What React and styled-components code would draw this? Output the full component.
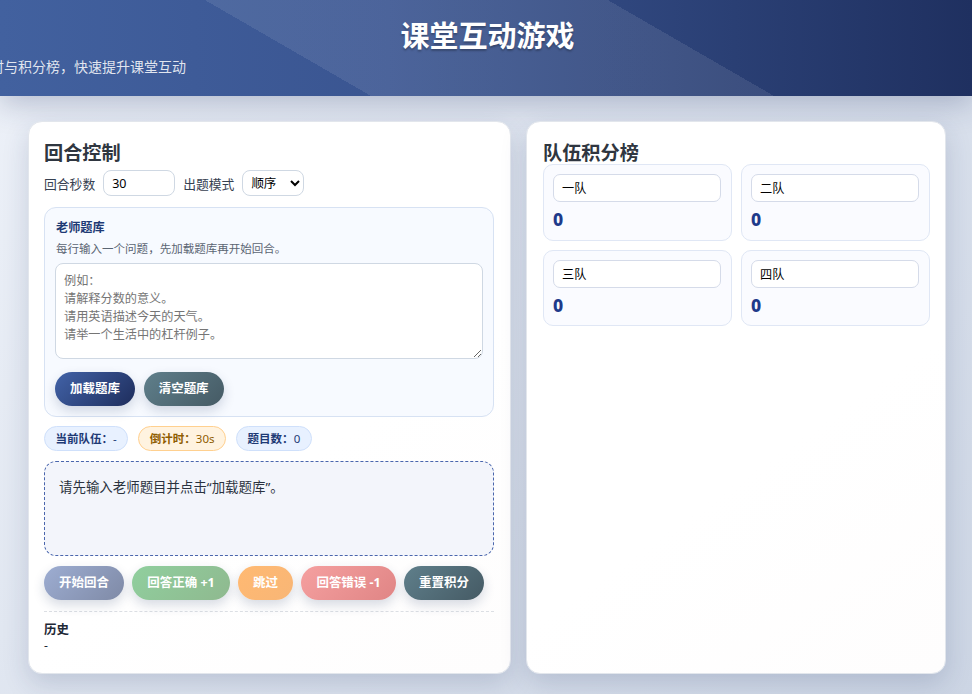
import React from "react";
import styled, { createGlobalStyle } from "styled-components";

const stack = `"Noto Sans", "Noto Sans CJK SC", sans-serif`;
const COMMA = "\uFF0C";
const COLON = "\uFF1A";

const Global = createGlobalStyle`
  * { box-sizing: border-box; }
  html, body { margin: 0; padding: 0; height: 694px; overflow: hidden; }
  body {
    font-family: ${stack};
    color: #1f2937;
    background: linear-gradient(135deg, #eef2f9 0%, #ccd5e4 100%);
  }
`;

const Page = styled.div`
  width: 972px;
  height: 694px;
  overflow: hidden;
  display: flex;
  flex-direction: column;
`;

const Hero = styled.header`
  height: 96px;
  flex: none;
  color: #fff;
  padding-top: 17px;
  background:
    linear-gradient(30deg, rgba(255,255,255,0) 32.6%, rgba(255,255,255,.09) 32.6%, rgba(255,255,255,.09) 68%, rgba(255,255,255,0) 68%),
    linear-gradient(90deg, #42619f 0%, #3a5591 40%, #1f3060 100%);
  box-shadow: 0 8px 28px rgba(30,48,96,.26);
`;

const Title = styled.h1`
  margin: 0;
  padding-left: 3px;
  font-size: 29px;
  line-height: 38px;
  font-weight: 700;
  text-align: center;
  text-shadow: 0 2px 2px rgba(0,0,0,.25);
`;

const Subtitle = styled.p`
  margin: 2px 0 0 -80px;
  font-size: 14px;
  line-height: 20px;
  white-space: nowrap;
  color: rgba(255,255,255,.85);
`;

const Main = styled.main`
  display: grid;
  grid-template-columns: 483px 420px;
  gap: 15px;
  padding: 25px 0 20px 28px;
  flex: 1;
  min-height: 0;
`;

const Card = styled.section`
  background: linear-gradient(145deg, #fff 60%, #fefdfd 100%);
  border: 1px solid #e2e6ec;
  border-radius: 14px;
  padding: 17px 16px 16px ${p => p.$left}px;
  box-shadow: 0 10px 26px rgba(30,48,96,.17);
`;

const CardTitle = styled.h2`
  margin: 0;
  font-size: 19.2px;
  line-height: 28px;
  font-weight: 700;
  color: #2f3640;
`;

const ControlRow = styled.div`
  display: flex;
  align-items: center;
  height: 26px;
  margin-top: 3px;
  font-size: 12.8px;
  color: #374151;
`;

const FieldLabel = styled.label`
  margin-right: 8px;
`;

const NumberInput = styled.input`
  width: 72px;
  height: 26px;
  margin-right: 8px;
  padding: 0 8px;
  border: 1px solid #cfd8e3;
  border-radius: 8px;
  font: 12.48px ${stack};
  color: #000;
  background: #fff;
`;

const ModeSelect = styled.select`
  width: 62px;
  height: 26px;
  padding: 0 4px;
  border: 1px solid #cfd8e3;
  border-radius: 8px;
  font: 12.48px ${stack};
  color: #000;
  background: #fff;
`;

const BankPanel = styled.div`
  margin-top: 11px;
  padding: 10px;
  height: 210px;
  background: #f7faff;
  border: 1px solid #d7e2f3;
  border-radius: 12px;
`;

const BankTitle = styled.div`
  margin-top: 1px;
  padding-left: 1px;
  font-size: 12.16px;
  line-height: 18px;
  font-weight: 700;
  color: #1e3a75;
`;

const BankHint = styled.div`
  margin-top: 4px;
  padding-left: 1px;
  font-size: 11.52px;
  line-height: 16px;
  color: #5b6573;
`;

const QuestionArea = styled.textarea`
  display: block;
  width: 100%;
  height: 96px;
  margin-top: 6px;
  padding: 8px 8px;
  border: 1px solid #cfd8e3;
  border-radius: 8px;
  background: #fff;
  font: 12.16px/18px ${stack};
  color: #333;
  &::placeholder { color: #757575; opacity: 1; }
`;

const ButtonRow = styled.div`
  display: flex;
  gap: ${p => p.$gap}px;
  margin-top: ${p => p.$top}px;
`;

const palettes = {
  primary: "linear-gradient(135deg, #4263a8, #1e2d5c)",
  slate: "linear-gradient(135deg, #5f7f8b, #455a64)",
  soft: "linear-gradient(135deg, #9dadd2, #7f8aa6)",
  green: "linear-gradient(135deg, #90cf9e, #8fb98f)",
  orange: "linear-gradient(135deg, #ffb972, #f8b676)",
  red: "linear-gradient(135deg, #f5a0a0, #e08585)",
};

const Pill = styled.button`
  height: 34px;
  padding: 0 15px;
  border: none;
  border-radius: 17px;
  font: 700 12.48px/34px ${stack};
  color: #fff;
  background: ${p => palettes[p.$tone]};
  box-shadow: 0 5px 12px rgba(30,48,96,.18);
  white-space: nowrap;
`;

const StatusRow = styled.div`
  display: flex;
  gap: 10px;
  margin-top: 9px;
`;

const chips = {
  blue: { bg: "#e8f1ff", border: "#cfe0fb", color: "#1e3a75" },
  amber: { bg: "#fff3e0", border: "#ffd08f", color: "#8f5d00" },
};

const Chip = styled.div`
  height: 25px;
  padding: 0 10.5px;
  border-radius: 13px;
  border: 1px solid ${p => chips[p.$tone].border};
  background: ${p => chips[p.$tone].bg};
  color: ${p => chips[p.$tone].color};
  font-size: 11.52px;
  line-height: 23px;
  white-space: nowrap;
  b { font-weight: 700; }
`;

const PromptBox = styled.div`
  height: 95px;
  margin-top: 10px;
  padding: 16px 14px;
  background: #f3f5fb;
  border: 1px dashed #4a66ad;
  border-radius: 12px;
  font-size: 13.44px;
  line-height: 18px;
  color: #2b3340;
`;

const History = styled.div`
  margin-top: 11px;
  padding-top: 9px;
  border-top: 1px dashed #dcdfe4;
  font-size: 12.16px;
  color: #1f2937;
`;

const HistoryTitle = styled.div`
  font-weight: 700;
  font-size: 12.48px;
  line-height: 18px;
`;

const HistoryBody = styled.div`
  line-height: 13px;
`;

const TeamGrid = styled.div`
  display: grid;
  grid-template-columns: 189px 189px;
  gap: 9px 9px;
  margin-top: -3px;
`;

const TeamCard = styled.div`
  height: 76.5px;
  padding: 9px 9px;
  background: #fafbff;
  border: 1px solid #e0e7f5;
  border-radius: 10px;
`;

const TeamInput = styled.input`
  display: block;
  width: 168px;
  height: 28px;
  padding: 0 8px;
  border: 1px solid #d5dbe9;
  border-radius: 7px;
  background: #fff;
  font: 12.16px ${stack};
  color: #000;
`;

const Score = styled.div`
  margin-top: 7px;
  font-size: 17.6px;
  line-height: 20px;
  font-weight: 800;
  color: #1e3a8a;
`;

const teams = ["一队", "二队", "三队", "四队"];

export default function App() {
  return (
    <Page>
      <Global />
      <Hero>
        <Title>课堂互动游戏</Title>
        <Subtitle>{`通过回合计时与积分榜${COMMA}快速提升课堂互动`}</Subtitle>
      </Hero>
      <Main>
        <Card $left={15}>
          <CardTitle>回合控制</CardTitle>
          <ControlRow>
            <FieldLabel>回合秒数</FieldLabel>
            <NumberInput type="text" defaultValue="30" />
            <FieldLabel>出题模式</FieldLabel>
            <ModeSelect defaultValue="顺序">
              <option>顺序</option>
              <option>随机</option>
            </ModeSelect>
          </ControlRow>
          <BankPanel>
            <BankTitle>老师题库</BankTitle>
            <BankHint>{`每行输入一个问题${COMMA}先加载题库再开始回合。`}</BankHint>
            <QuestionArea placeholder={`例如${COLON}\n请解释分数的意义。\n请用英语描述今天的天气。\n请举一个生活中的杠杆例子。`} />
            <ButtonRow $top={13} $gap={8.8}>
              <Pill $tone="primary">加载题库</Pill>
              <Pill $tone="slate">清空题库</Pill>
            </ButtonRow>
          </BankPanel>
          <StatusRow>
            <Chip $tone="blue"><b>{`当前队伍${COLON}`}</b>-</Chip>
            <Chip $tone="amber"><b>{`倒计时${COLON}`}</b>30s</Chip>
            <Chip $tone="blue"><b>{`题目数${COLON}`}</b>0</Chip>
          </StatusRow>
          <PromptBox>请先输入老师题目并点击“加载题库”。</PromptBox>
          <ButtonRow $top={10} $gap={8.4}>
            <Pill $tone="soft">开始回合</Pill>
            <Pill $tone="green">回答正确 +1</Pill>
            <Pill $tone="orange">跳过</Pill>
            <Pill $tone="red">回答错误 -1</Pill>
            <Pill $tone="slate">重置积分</Pill>
          </ButtonRow>
          <History>
            <HistoryTitle>历史</HistoryTitle>
            <HistoryBody>-</HistoryBody>
          </History>
        </Card>
        <Card $left={16}>
          <CardTitle>队伍积分榜</CardTitle>
          <TeamGrid>
            {teams.map(t => (
              <TeamCard key={t}>
                <TeamInput type="text" defaultValue={t} />
                <Score>0</Score>
              </TeamCard>
            ))}
          </TeamGrid>
        </Card>
      </Main>
    </Page>
  );
}
